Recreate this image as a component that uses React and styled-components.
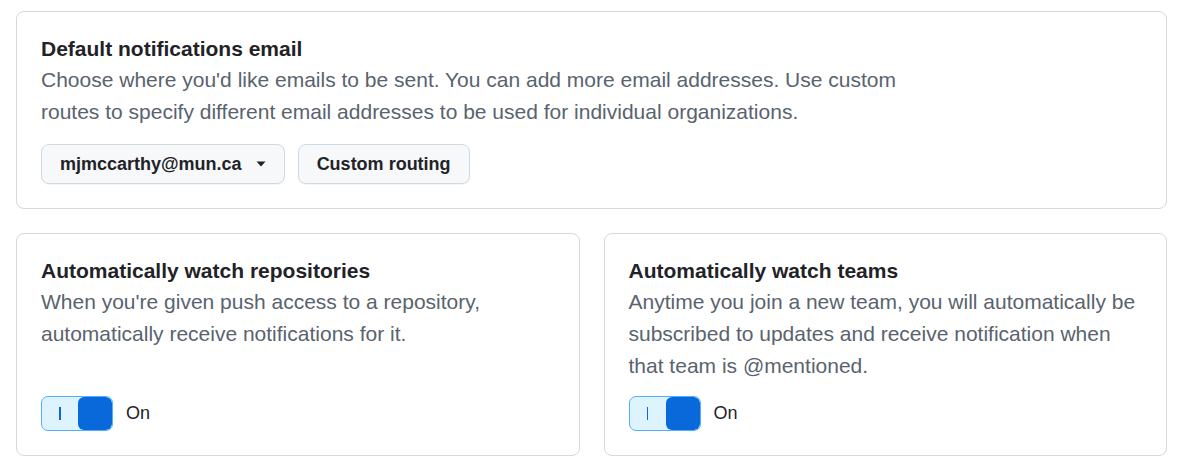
import styled, { createGlobalStyle } from 'styled-components';

const GlobalStyle = createGlobalStyle`
  body {
    margin: 0;
    background: #ffffff;
    font-family: "Liberation Sans", Arial, sans-serif;
    color: #1f2328;
  }
`;

const Page = styled.div`
  padding: 11px 20px 0 16px;
  display: flex;
  flex-direction: column;
  gap: 24px;
`;

const Card = styled.section`
  border: 1px solid #d1d9e0;
  border-radius: 8px;
  padding: 24px;
  display: flex;
  flex-direction: column;
`;

const Row = styled.div`
  display: grid;
  grid-template-columns: 1fr 1fr;
  gap: 24px;
`;

const Title = styled.h2`
  margin: 0 0 2px;
  font-size: 21px;
  line-height: 26px;
  font-weight: 700;
  color: #1f2328;
`;

const Description = styled.p`
  margin: 0;
  font-size: 21px;
  line-height: 32px;
  color: #59636e;
  max-width: ${({ wide }) => (wide ? '880px' : 'none')};
`;

const Actions = styled.div`
  display: flex;
  gap: 13px;
  margin-top: 16px;
`;

const Button = styled.button`
  height: 40px;
  padding: 0 18px;
  display: inline-flex;
  align-items: center;
  gap: 14px;
  background: #f6f8fa;
  border: 1px solid #d1d9e0;
  border-radius: 8px;
  font-family: "Liberation Sans", Arial, sans-serif;
  font-size: 18px;
  font-weight: 700;
  color: #1f2328;
  box-shadow: 0 1px 0 rgba(31, 35, 40, 0.04);
`;

const ToggleRow = styled.div`
  margin-top: auto;
  padding-top: 14px;
  display: flex;
  align-items: center;
  gap: 13px;
`;

const Switch = styled.div`
  width: 72px;
  height: 35px;
  box-sizing: border-box;
  display: flex;
  background: #ddf4ff;
  border: 1px solid #54aeff;
  border-radius: 7px;
  overflow: hidden;
`;

const OnMark = styled.div`
  flex: 1;
  display: flex;
  align-items: center;
  justify-content: center;

  &::before {
    content: '';
    width: 1.5px;
    height: 13px;
    background: #0969da;
  }
`;

const Knob = styled.div`
  width: 34px;
  height: 100%;
  background: #0969da;
  border-radius: 6px;
`;

const ToggleLabel = styled.span`
  font-size: 18px;
  color: #1f2328;
`;

const Caret = () => (
  <svg width="10" height="8" viewBox="0 0 10 8" aria-hidden="true">
    <path d="M0.5 1.5h9L5 6.5z" fill="#1f2328" />
  </svg>
);

const Toggle = () => (
  <ToggleRow>
    <Switch>
      <OnMark />
      <Knob />
    </Switch>
    <ToggleLabel>On</ToggleLabel>
  </ToggleRow>
);

const App = () => (
  <>
    <GlobalStyle />
    <Page>
      <Card>
        <Title>Default notifications email</Title>
        <Description wide>
          Choose where you'd like emails to be sent. You can add more email addresses. Use custom
          routes to specify different email addresses to be used for individual organizations.
        </Description>
        <Actions>
          <Button>
            mjmccarthy@mun.ca
            <Caret />
          </Button>
          <Button>Custom routing</Button>
        </Actions>
      </Card>
      <Row>
        <Card>
          <Title>Automatically watch repositories</Title>
          <Description>
            When you're given push access to a repository, automatically receive notifications
            for it.
          </Description>
          <Toggle />
        </Card>
        <Card>
          <Title>Automatically watch teams</Title>
          <Description>
            Anytime you join a new team, you will automatically be subscribed to updates and
            receive notification when that team is @mentioned.
          </Description>
          <Toggle />
        </Card>
      </Row>
    </Page>
  </>
);

export default App;
